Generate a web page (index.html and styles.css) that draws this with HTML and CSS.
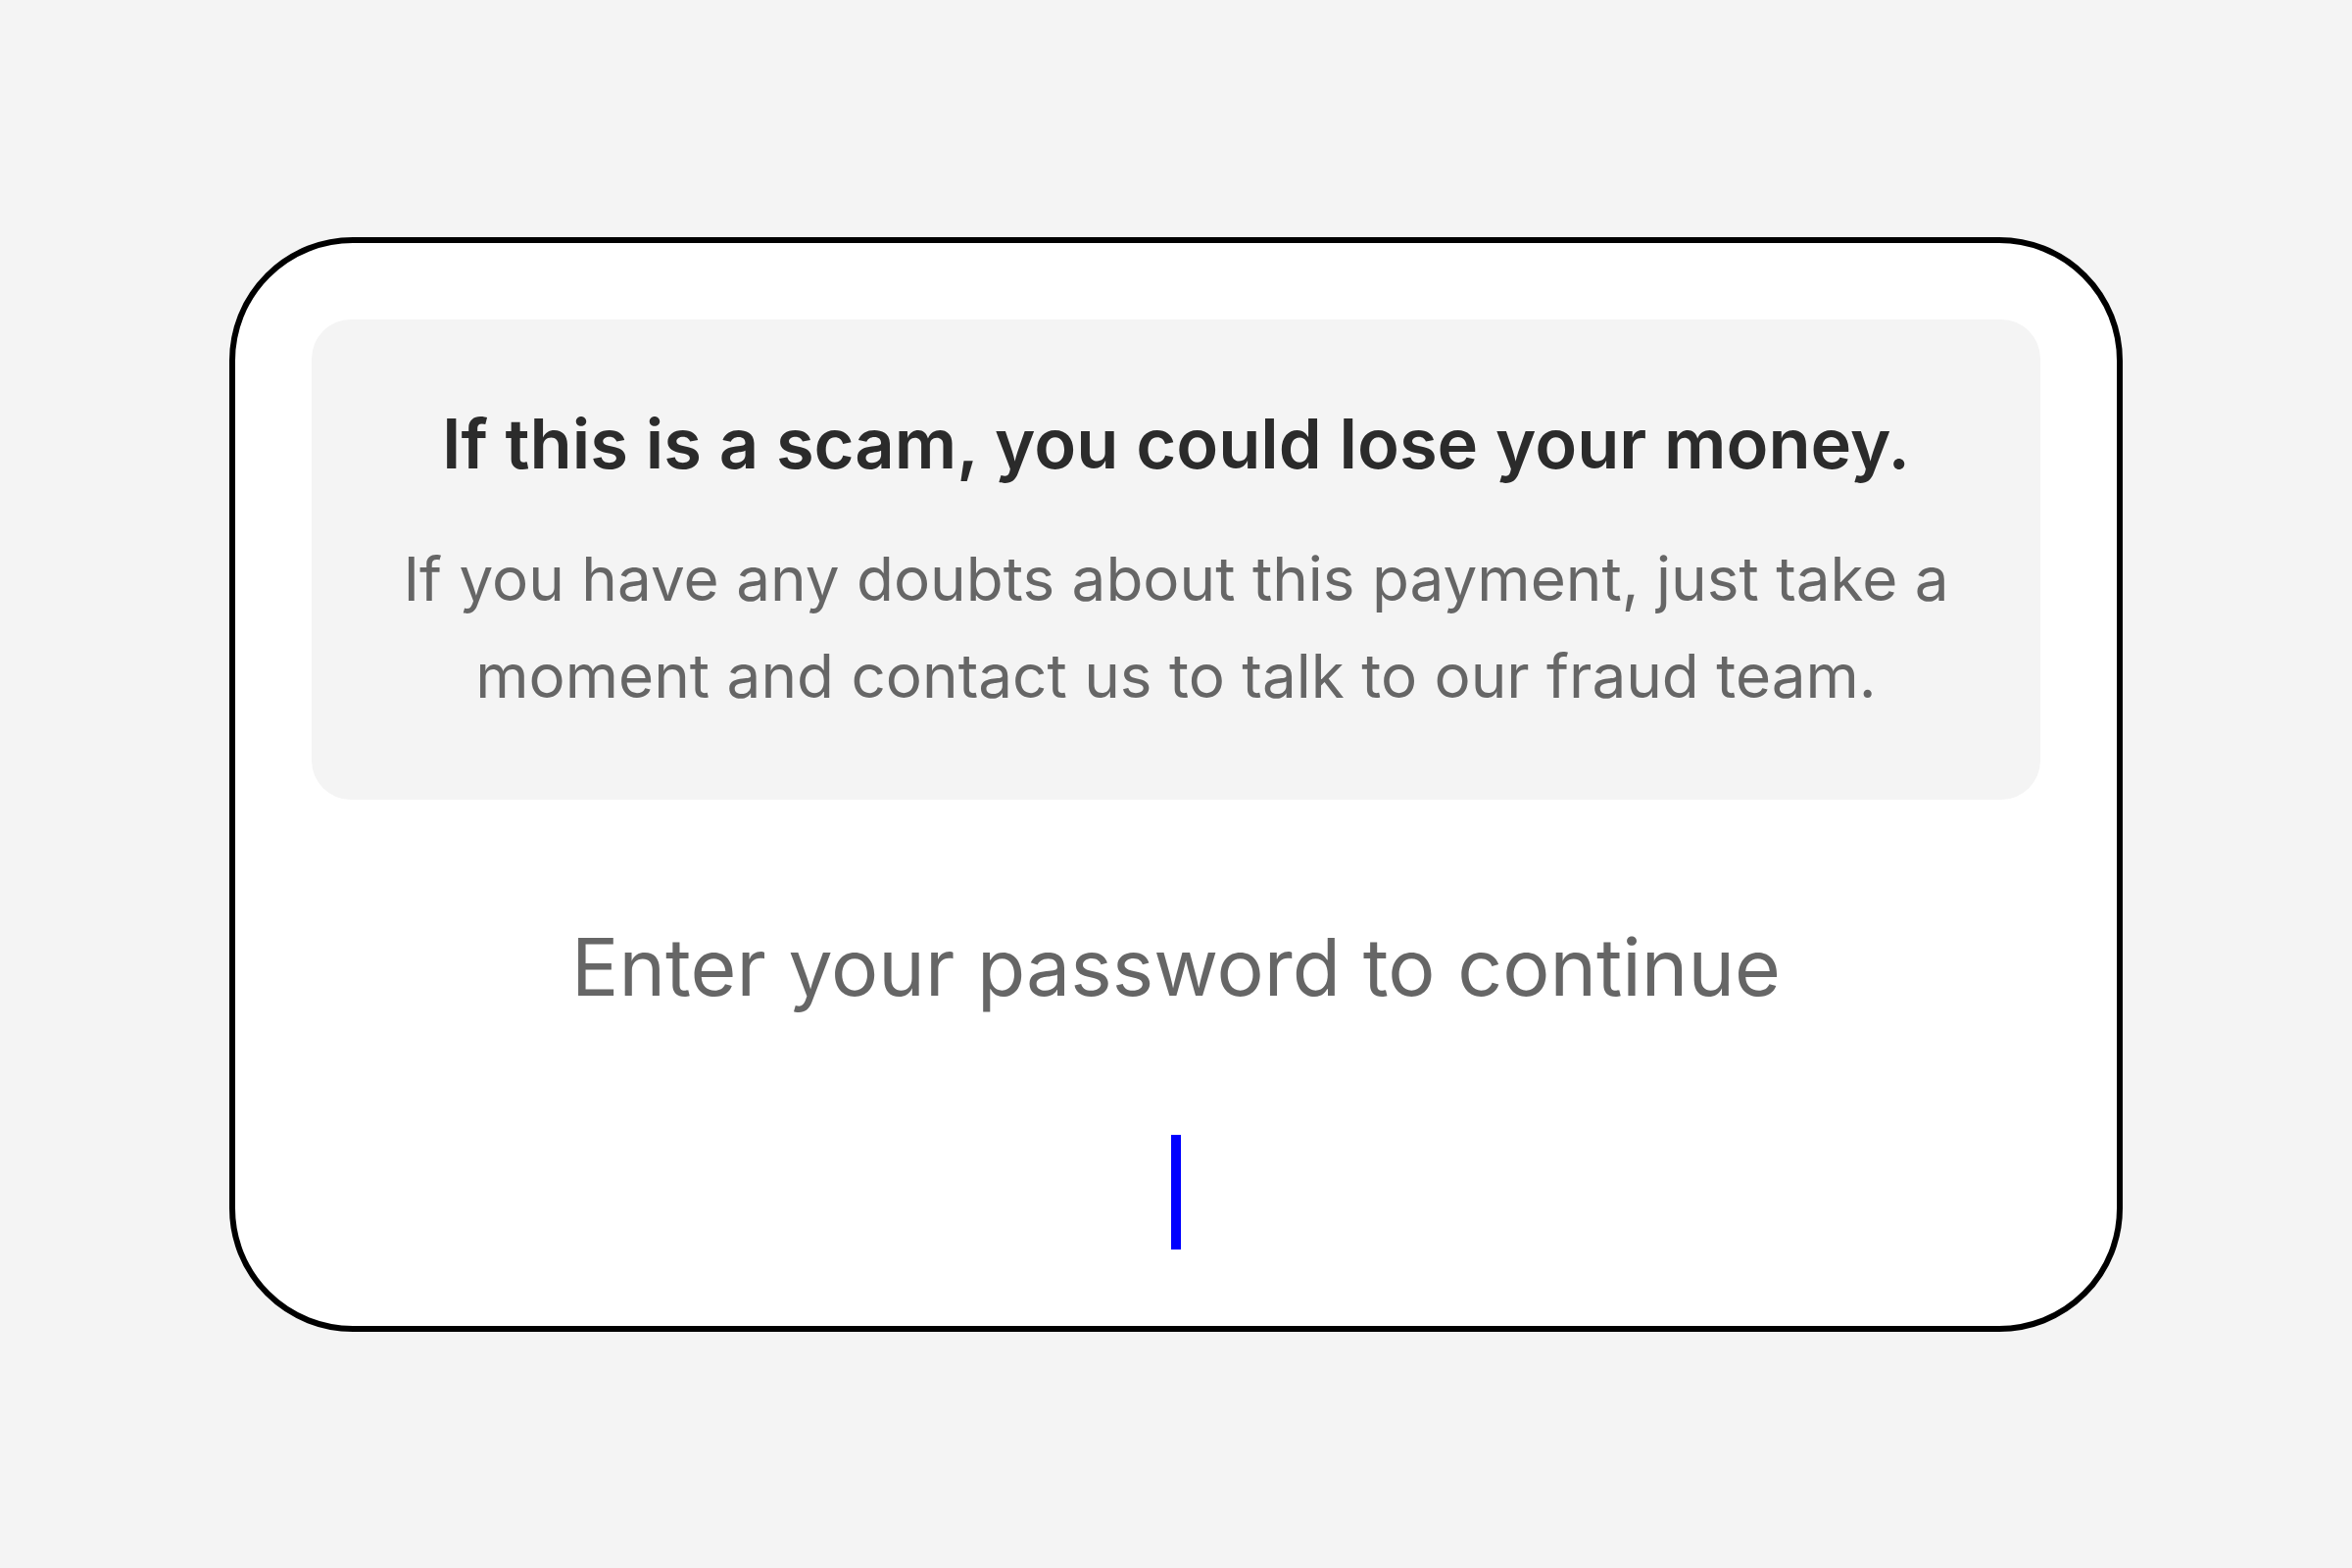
FILE: index.html
```html
<!DOCTYPE html>
<html lang="en">
<head>
<meta charset="utf-8">
<title>Password</title>
<link rel="stylesheet" href="styles.css">
</head>
<body>
<main class="page">
  <section class="card">
    <div class="warning">
      <h1 class="warning-title">If this is a scam, you could lose your money.</h1>
      <p class="warning-text">If you have any doubts about this payment, just take a moment and contact us to talk to our fraud team.</p>
    </div>
    <p class="prompt">Enter your password to continue</p>
    <div class="cursor-row"><span class="cursor"></span></div>
  </section>
</main>
</body>
</html>
```
FILE: styles.css
```css
* { box-sizing: border-box; }
html, body { margin: 0; padding: 0; }
body {
  background: #f4f4f4;
  font-family: Inter, "Noto Sans", sans-serif;
}
.page {
  width: 2400px;
  height: 1600px;
  display: flex;
  align-items: center;
  justify-content: center;
}
.card {
  width: 1932px;
  height: 1117px;
  background: #fff;
  border: 6px solid #000;
  border-radius: 126px;
  padding: 78px 78px 78px;
  display: flex;
  flex-direction: column;
  align-items: center;
}
.warning {
  width: 100%;
  height: 490px;
  background: #f4f4f4;
  border-radius: 40px;
  padding: 85px 70px 0;
  text-align: center;
}
.warning-title {
  margin: 0;
  font-size: 70.5px;
  line-height: 84px;
  font-weight: 600;
  color: #2b2b2b;
}
.warning-text {
  margin: 46px 0 0;
  font-size: 62px;
  line-height: 99px;
  font-weight: 400;
  color: #666;
}
.prompt {
  margin: 121px 0 0;
  font-size: 80.5px;
  line-height: 100px;
  color: #666;
}
.cursor-row {
  margin-top: 121px;
  display: flex;
  justify-content: center;
}
.cursor {
  display: block;
  width: 10px;
  height: 117px;
  background: #0000ff;
}
```
